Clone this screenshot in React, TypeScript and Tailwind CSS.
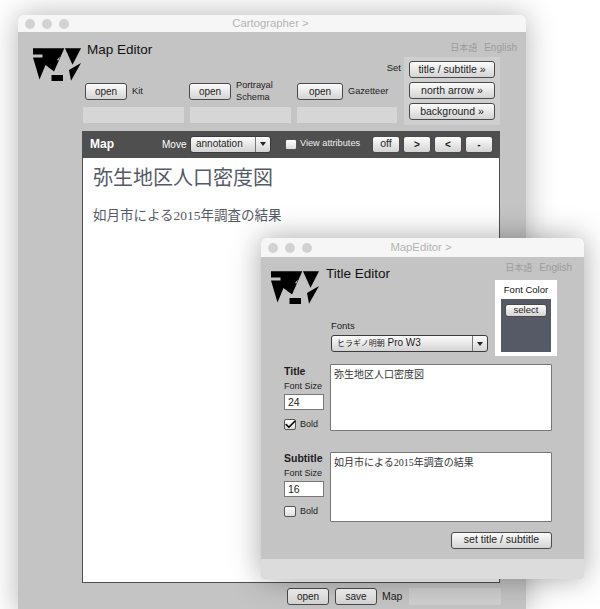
import { Check } from "lucide-react";
import type { ReactNode } from "react";

const btn =
    "flex items-center justify-center rounded-[3px] border border-[#4a4a4a] bg-linear-to-b from-[#fcfcfc] to-[#d4d4d4] text-[#1c1c1c]";
const jpSerif = { fontFamily: '"Liberation Serif", "Noto Sans CJK JP", serif' };

function Logo() {
    return (
        <svg width="50" height="34" viewBox="0 0 50 34" className="shrink-0">
            <path d="M2 1.3H33.3L23 24.5L14.5 18L8.5 32.5L2 10.5H11.5V7.5H2Z" fill="#000" />
            <path d="M34 1.3H50L41.5 17.7Z" fill="#000" />
            <path d="M50 16L40 33.7L38 23Z" fill="#000" />
            <rect x="20.5" y="28" width="11.5" height="6" fill="#000" />
            <path d="M26 13L29 9.5L27.5 13.5Z" fill="#c4c4c4" />
        </svg>
    );
}

function Lights() {
    return (
        <div className="flex gap-[7px] pl-[7px]">
            <span className="size-[10px] rounded-full bg-[#d2d2d2]" />
            <span className="size-[10px] rounded-full bg-[#d2d2d2]" />
            <span className="size-[10px] rounded-full bg-[#d2d2d2]" />
        </div>
    );
}

function TitleBar({ title, height }: { title: string; height: string }) {
    return (
        <div className={`${height} relative flex items-center rounded-t-[5px] bg-[#f6f6f6]`}>
            <Lights />
            <span className="flex-1 pr-[54px] text-center text-[11.3px] text-[#b4b4b4]">{title}</span>
        </div>
    );
}

function Lang() {
    return (
        <div className="flex items-baseline justify-end gap-[7px] text-[10px] leading-[12px] text-[#9c9c9c]">
            <span className="text-[9px]">日本語</span>
            <span>English</span>
        </div>
    );
}

function Arrow() {
    return (
        <svg width="6" height="4" viewBox="0 0 6 4">
            <path d="M0 0H6L3 4Z" fill="#222" />
        </svg>
    );
}

function Select({ label, width }: { label: ReactNode; width: string }) {
    return (
        <div className={`${width} flex h-[17px] overflow-hidden rounded-[3px] border border-[#3c3c3c] bg-linear-to-b from-[#fcfcfc] to-[#d4d4d4]`}>
            <span className="flex-1 truncate pl-[5px] text-[10px] leading-[14px] text-[#1c1c1c]">{label}</span>
            <span className="flex w-[15px] items-center justify-center border-l border-[#777]">
                <Arrow />
            </span>
        </div>
    );
}

function Box({ checked }: { checked?: boolean }) {
    return (
        <span className="flex h-[11px] w-[12px] shrink-0 items-center justify-center rounded-[2px] border border-[#555] bg-linear-to-b from-white to-[#dedede]">
            {checked && <Check className="size-[13px] shrink-0 text-black" strokeWidth={3} />}
        </span>
    );
}

function OpenItem({ label, offset, size }: { label: ReactNode; offset: string; size: string }) {
    return (
        <div className={`${offset} flex h-[17px] w-[101px] items-center gap-[5px]`}>
            <button className={`${btn} ${size} h-[17px] shrink-0 text-[10px]`}>open</button>
            <span className="text-[9.2px] leading-[11.5px] whitespace-nowrap text-[#1c1c1c]">{label}</span>
        </div>
    );
}

function FontSide({ title, size, checked }: { title: string; size: string; checked?: boolean }) {
    return (
        <div className="w-[46px] shrink-0 pt-[1px] text-[#1c1c1c]">
            <div className="text-[10.5px] leading-[13px] font-bold">{title}</div>
            <div className="mt-[2px] text-[9px] leading-[12px]">Font Size</div>
            <div className="mt-[2px] h-[16px] w-[40px] border border-[#777] bg-white pl-[3px] text-[10.5px] leading-[14px]">
                {size}
            </div>
            <div className="mt-[8px] flex items-center gap-[4px] text-[9px]">
                <Box checked={checked} />
                Bold
            </div>
        </div>
    );
}

function TextBox({ text, height }: { text: string; height: string }) {
    return (
        <div
            className={`${height} w-[222px] rounded-[1px] border border-[#777] bg-white pt-[3px] pl-[3px] text-[10px] leading-[14px] text-[#333]`}
            style={jpSerif}
        >
            {text}
        </div>
    );
}

export default function App() {
    return (
        <div
            className="relative h-[609px] w-[600px] overflow-hidden bg-white"
            style={{ fontFamily: '"Liberation Sans", "Noto Sans CJK JP", sans-serif' }}
        >
            {/* main window */}
            <div className="absolute top-[15px] left-[18px] h-[600px] w-[508px] rounded-t-[5px] bg-[#c4c4c4] shadow-[0_0_30px_rgba(0,0,0,0.3)]">
                <TitleBar title="Cartographer >" height="h-[17px]" />
                <div className="flex pl-[13px]">
                    <div className="w-[370px] shrink-0 pt-[15px]">
                        <div className="flex h-[36px] justify-between">
                            <div className="flex gap-[6px]">
                                <Logo />
                                <span className="-mt-[6px] text-[13.5px] leading-[18px] text-[#111]">Map Editor</span>
                            </div>
                            <span className="self-end pb-[9px] text-[9.5px] leading-[12px] text-[#1c1c1c]">Set</span>
                        </div>
                        <div className="mb-[7px] flex pl-[54px]">
                            <OpenItem label="Kit" offset="" size="w-[42px]" />
                            <OpenItem
                                label={
                                    <>
                                        Portrayal
                                        <br />
                                        Schema
                                    </>
                                }
                                offset="ml-[3px]"
                                size="w-[42px]"
                            />
                            <OpenItem label="Gazetteer" offset="ml-[7px]" size="w-[46px]" />
                        </div>
                        <div className="flex gap-[6px] pl-[52px]">
                            <div className="h-[16px] w-[101px] bg-[#d6d6d6]" />
                            <div className="h-[16px] w-[101px] bg-[#d6d6d6]" />
                            <div className="h-[16px] w-[100px] bg-[#d6d6d6]" />
                        </div>
                    </div>
                    <div className="ml-[3px] w-[113px] pt-[10px]">
                        <div className="h-[15px]">
                            <Lang />
                        </div>
                        <div className="flex w-[96px] flex-col gap-[4px] bg-[#cfcfcf] px-[5px] pt-[4px] pb-[5px]">
                            <button className={`${btn} h-[17px] text-[10.5px]`}>title / subtitle »</button>
                            <button className={`${btn} h-[17px] text-[10.5px]`}>north arrow »</button>
                            <button className={`${btn} h-[17px] text-[10.5px]`}>background »</button>
                        </div>
                    </div>
                </div>

                <div className="mt-[6px] ml-[64px] w-[418px]">
                    <div className="flex h-[27px] items-center bg-[#4f4f4f] pb-[1px] pl-[8px] text-white">
                        <span className="w-[72px] text-[12px] font-bold">Map</span>
                        <span className="w-[28px] text-[10px]">Move</span>
                        <Select label="annotation" width="w-[81px]" />
                        <span className="ml-[14px]">
                            <Box />
                        </span>
                        <span className="ml-[3px] w-[72px] text-[9.2px] text-[#eee]">View attributes</span>
                        <div className="flex gap-[3px]">
                            <button className={`${btn} h-[17px] w-[28px] text-[10.5px]`}>off</button>
                            <button className={`${btn} h-[17px] w-[28px] text-[10px] font-bold`}>&gt;</button>
                            <button className={`${btn} h-[17px] w-[28px] text-[10px] font-bold`}>&lt;</button>
                            <button className={`${btn} h-[17px] w-[28px] text-[10px] font-bold`}>-</button>
                        </div>
                    </div>
                    <div className="h-[425px] border-x border-b border-[#4f4f4f] bg-white pt-[7px] pl-[10px] text-[#555a66]" style={jpSerif}>
                        <div className="text-[20px] leading-[26px]">弥生地区人口密度図</div>
                        <div className="mt-[16px] text-[13.5px] leading-[18px]">如月市による2015年調査の結果</div>
                    </div>
                </div>

                <div className="mt-[5px] ml-[269px] flex items-center text-[#1c1c1c]">
                    <button className={`${btn} h-[17px] w-[42px] text-[10px]`}>open</button>
                    <button className={`${btn} ml-[6px] h-[17px] w-[42px] text-[10px]`}>save</button>
                    <span className="ml-[5px] w-[27px] text-[10.5px]">Map</span>
                    <div className="h-[17px] w-[92px] bg-[#cfcfcf]" />
                </div>
            </div>

            {/* title editor window */}
            <div className="absolute top-[238px] left-[261px] flex h-[341px] w-[323px] flex-col rounded-[5px] bg-[#c4c4c4] shadow-[0_0_30px_rgba(0,0,0,0.35)]">
                <TitleBar title="MapEditor >" height="h-[19px]" />
                <div className="flex-1">
                    <div className="flex h-[107px] pl-[8px]">
                        <div className="w-[226px] shrink-0 pt-[13px]">
                            <div className="flex h-[50px] gap-[7px]">
                                <Logo />
                                <span className="-mt-[5px] text-[13.5px] leading-[18px] text-[#111]">Title Editor</span>
                            </div>
                            <div className="ml-[62px]">
                                <div className="text-[9.5px] leading-[12px] text-[#1c1c1c]">Fonts</div>
                                <div className="mt-[3px]">
                                    <Select
                                        label={
                                            <>
                                                <span className="text-[8px]">ヒラギノ明朝</span> Pro W3
                                            </>
                                        }
                                        width="w-[157px]"
                                    />
                                </div>
                            </div>
                        </div>
                        <div className="w-[77px] pt-[5px]">
                            <Lang />
                            <div className="mt-[6px] h-[76px] w-[62px] bg-white px-[6px]">
                                <div className="h-[19px] text-center text-[9.5px] leading-[19px] text-[#111]">Font Color</div>
                                <div className="h-[53px] bg-[#555a66] pt-[5px]">
                                    <button className={`${btn} mx-auto h-[13px] w-[42px] text-[9.5px]`}>select</button>
                                </div>
                            </div>
                        </div>
                    </div>
                    <div className="flex pl-[23px]">
                        <FontSide title="Title" size="24" checked />
                        <TextBox text="弥生地区人口密度図" height="h-[67px]" />
                    </div>
                    <div className="mt-[20px] flex pl-[23px]">
                        <div className="-mt-[1px]">
                            <FontSide title="Subtitle" size="16" />
                        </div>
                        <TextBox text="如月市による2015年調査の結果" height="h-[70px]" />
                    </div>
                    <div className="mt-[10px] flex justify-end pr-[32px]">
                        <button className={`${btn} h-[17px] w-[101px] text-[10.5px]`}>set title / subtitle</button>
                    </div>
                </div>
                <div className="h-[20px] rounded-b-[5px] bg-[#dcdcdc]" />
            </div>
        </div>
    );
}
